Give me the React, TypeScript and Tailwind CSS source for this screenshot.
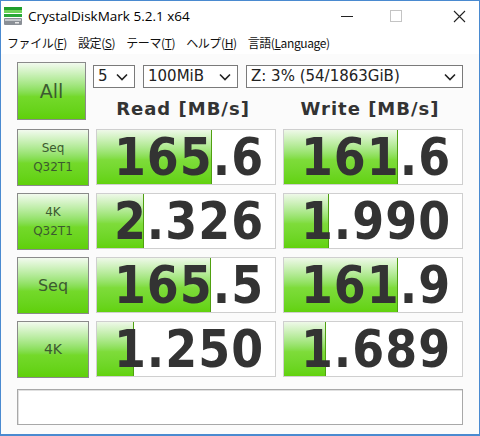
import type { ReactNode } from 'react'

const tahoma = { fontFamily: '"DejaVu Sans", "Noto Sans CJK JP", sans-serif' }

const rows = [
  { label: ['Seq', 'Q32T1'], size: 'text-[12px]', read: '165.6', readBar: 115, write: '161.6', writeBar: 114 },
  { label: ['4K', 'Q32T1'], size: 'text-[12px]', read: '2.326', readBar: 47, write: '1.990', writeBar: 45 },
  { label: ['Seq'], size: 'text-[16px]', read: '165.5', readBar: 114, write: '161.9', writeBar: 114 },
  { label: ['4K'], size: 'text-[14px]', read: '1.250', readBar: 37, write: '1.689', writeBar: 42 },
]

const menus = [
  { name: 'ファイル', key: 'F' },
  { name: '設定', key: 'S' },
  { name: 'テーマ', key: 'T' },
  { name: 'ヘルプ', key: 'H' },
  { name: '言語', key: 'L', rest: 'anguage' },
]

const Logo = () => (
  <svg width="20" height="20" viewBox="0 0 20 20">
    <rect x="1" y="1" width="18" height="3" fill="#1f9e2c" />
    <rect x="1" y="4" width="18" height="3" fill="#6fd35a" />
    <rect x="1" y="8" width="18" height="3" fill="#2aa838" />
    <rect x="1" y="12" width="18" height="7" rx="1" fill="#8a8f96" />
    <rect x="2" y="13" width="16" height="2" fill="#c4c8cc" />
    <rect x="12" y="16" width="4" height="1.5" fill="#e8e8e8" />
  </svg>
)

const Chevron = () => (
  <svg width="12" height="8" viewBox="0 0 12 8" className="shrink-0">
    <path d="M1 1.5 L6 6.5 L11 1.5" fill="none" stroke="#222" strokeWidth="1.6" />
  </svg>
)

const Select = ({ w, children }: { w: string; children: ReactNode }) => (
  <div
    className={`${w} h-[23px] flex items-center justify-between border border-[#7a7a7a] bg-white pl-[4px] pr-[6px] text-[15px] text-[#222]`}
    style={tahoma}
  >
    <span>{children}</span>
    <Chevron />
  </div>
)

const GreenButton = ({ children, className = '' }: { children: ReactNode; className?: string }) => (
  <div
    className={`w-[72px] flex flex-col items-center justify-center border border-[#8a8a8a] bg-gradient-to-b from-[#f2faee] via-[#74d92a] via-60% to-[#5fd008] text-[#3c5a30] leading-[19px] ${className}`}
    style={tahoma}
  >
    {children}
  </div>
)

const Cell = ({ value, bar }: { value: string; bar: number }) => (
  <div className="relative w-[180px] h-[56px] border border-[#cfcfcf] bg-white">
    <div
      className="absolute left-0 top-0 bottom-0 bg-gradient-to-b from-[#eef8e8] via-[#7edc3a] via-55% to-[#62d20c] border-r border-[#4fa010]"
      style={{ width: bar }}
    />
    <div
      className="relative h-full flex items-center justify-center text-[51px] font-bold text-[#333] tracking-[1px] leading-none pl-[6px]"
      style={{ fontFamily: '"DejaVu Sans Condensed", "DejaVu Sans", sans-serif' }}
    >
      {value}
    </div>
  </div>
)

export default function App() {
  return (
    <div className="w-[480px] h-[436px] flex flex-col border border-[#4a8ad0] border-b-2 bg-white overflow-hidden">
      <div className="h-[30px] flex items-center shrink-0">
        <div className="ml-[2px] mr-[5px]">
          <Logo />
        </div>
        <span className="text-[13.5px] text-black" style={{ fontFamily: '"Open Sans", sans-serif' }}>
          CrystalDiskMark 5.2.1 x64
        </span>
        <div className="ml-auto mr-[13px] flex items-center">
          <div className="w-[12px] h-px bg-[#222]" />
          <div className="ml-[37px] w-[12px] h-[12px] border border-[#c4c4c4]" />
          <svg width="13" height="13" viewBox="0 0 13 13" className="ml-[51px]">
            <path d="M1 1 L12 12 M12 1 L1 12" stroke="#222" strokeWidth="1.1" />
          </svg>
        </div>
      </div>
      <div
        className="h-[23px] flex items-center gap-[11px] pl-[6px] text-[12px] tracking-[-0.4px] text-[#111] shrink-0"
        style={{ fontFamily: '"Noto Sans CJK JP", sans-serif' }}
      >
        {menus.map((m) => (
          <span key={m.name}>
            {m.name}(<span className="underline">{m.key}</span>
            {m.rest})
          </span>
        ))}
      </div>
      <div className="flex-1 bg-[#fbfbfb] px-[16px] pt-[8px]">
        <div className="flex gap-[7px]">
          <GreenButton className="h-[58px] text-[19px]">All</GreenButton>
          <div className="flex flex-col">
            <div className="flex gap-[8px] mt-[3px]">
              <Select w="w-[42px]">5</Select>
              <Select w="w-[95px]">100MiB</Select>
              <Select w="w-[217px]">Z: 3% (54/1863GiB)</Select>
            </div>
            <div className="flex gap-[7px] mt-[7px]">
              <div className="w-[180px] text-center text-[18px] font-bold text-[#333] tracking-[1px]" style={tahoma}>
                Read [MB/s]
              </div>
              <div className="w-[180px] text-center text-[18px] font-bold text-[#333] tracking-[1px]" style={tahoma}>
                Write [MB/s]
              </div>
            </div>
          </div>
        </div>
        {rows.map((r) => (
          <div key={r.read} className="flex gap-[7px] mt-[7px]">
            <GreenButton className={`h-[57px] ${r.size}`}>
              {r.label.map((l) => (
                <span key={l}>{l}</span>
              ))}
            </GreenButton>
            <Cell value={r.read} bar={r.readBar} />
            <Cell value={r.write} bar={r.writeBar} />
          </div>
        ))}
        <div className="mt-[11px] w-[446px] h-[36px] border border-[#a8a8a8] bg-white shadow-[inset_1px_1px_0_#e0e0e0]" />
      </div>
    </div>
  )
}
